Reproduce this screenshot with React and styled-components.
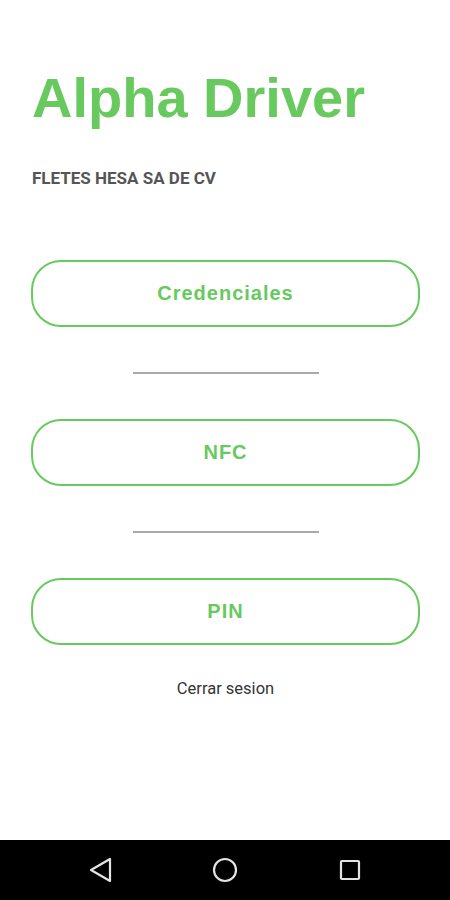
import React from "react";
import styled, { createGlobalStyle } from "styled-components";

const green = "#68c95e";

const GlobalStyle = createGlobalStyle`
  html, body {
    margin: 0;
    padding: 0;
    background: #ffffff;
  }
  * {
    box-sizing: border-box;
  }
`;

const Screen = styled.div`
  width: 450px;
  height: 900px;
  display: flex;
  flex-direction: column;
  background: #ffffff;
`;

const Content = styled.main`
  flex: 1;
  display: flex;
  flex-direction: column;
  padding: 70px 30px 0 31px;
`;

const Title = styled.h1`
  margin: 0 0 0 1px;
  font-family: "Liberation Sans", Arial, sans-serif;
  font-weight: 700;
  font-size: 56px;
  line-height: 56px;
  color: ${green};
`;

const Company = styled.p`
  margin: 44px 0 0 1px;
  font-family: Roboto, "Liberation Sans", sans-serif;
  font-weight: 700;
  font-size: 17px;
  line-height: 17px;
  color: #555555;
`;

const Options = styled.div`
  margin-top: 73px;
  display: flex;
  flex-direction: column;
  align-items: center;
  gap: 45px;
`;

const OptionButton = styled.button`
  width: 389px;
  height: 67px;
  border: 2px solid ${green};
  border-radius: 30px;
  background: #ffffff;
  font-family: "Liberation Sans", Arial, sans-serif;
  font-weight: 700;
  font-size: 20px;
  letter-spacing: 1px;
  color: ${green};
  cursor: pointer;
`;

const Divider = styled.hr`
  width: 186px;
  height: 2px;
  margin: 0;
  border: none;
  background: #a9a9a9;
`;

const Logout = styled.a`
  margin-top: 34px;
  align-self: center;
  font-family: Roboto, "Liberation Sans", sans-serif;
  font-size: 16.5px;
  line-height: 20px;
  color: #333333;
  text-decoration: none;
`;

const NavBar = styled.nav`
  height: 60px;
  background: #000000;
  display: flex;
  justify-content: center;
  align-items: center;
  gap: 97px;
`;

const NavIcon = styled.svg`
  width: 28px;
  height: 28px;
  stroke: #e4e4e4;
  stroke-width: 2.2;
  fill: none;
  stroke-linejoin: round;
`;

const options = ["Credenciales", "NFC", "PIN"];

export default function App() {
  return (
    <>
      <GlobalStyle />
      <Screen>
        <Content>
          <Title>Alpha Driver</Title>
          <Company>FLETES HESA SA DE CV</Company>
          <Options>
            {options.map((label, i) => (
              <React.Fragment key={label}>
                {i > 0 && <Divider />}
                <OptionButton>{label}</OptionButton>
              </React.Fragment>
            ))}
          </Options>
          <Logout href="#">Cerrar sesion</Logout>
        </Content>
        <NavBar>
          <NavIcon viewBox="0 0 28 28">
            <path d="M5 14 L24 3 L24 25 Z" />
          </NavIcon>
          <NavIcon viewBox="0 0 28 28">
            <circle cx="14" cy="14" r="11" />
          </NavIcon>
          <NavIcon viewBox="0 0 28 28">
            <rect x="5" y="5" width="18" height="18" rx="1" />
          </NavIcon>
        </NavBar>
      </Screen>
    </>
  );
}
